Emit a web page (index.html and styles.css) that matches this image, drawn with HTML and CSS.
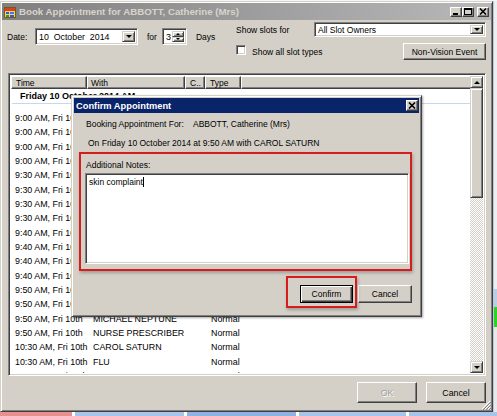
FILE: index.html
```html
<!DOCTYPE html>
<html>
<head>
<meta charset="utf-8">
<title>Book Appointment</title>
<link rel="stylesheet" href="styles.css">
</head>
<body>
<div class="screen">
  <div class="top-strip"></div>
  <div class="main">
    <div class="window">
      <div class="titlebar">
        <svg class="app-icon" width="12" height="12" viewBox="0 0 12 12">
          <rect x="0.5" y="1.5" width="11" height="10" fill="#f4d36a" stroke="#7a5a10" stroke-width="1"/>
          <rect x="1" y="2" width="10" height="3" fill="#d8402a"/>
          <rect x="2" y="6" width="3" height="2" fill="#2a5bd8"/>
          <rect x="6" y="6" width="4" height="2" fill="#3a7be8"/>
          <rect x="2" y="9" width="3" height="2" fill="#2a9b3a"/>
          <rect x="6" y="9" width="4" height="2" fill="#2a5bd8"/>
        </svg>
        <span class="title">Book Appointment for ABBOTT, Catherine (Mrs)</span>
        <div class="caption-buttons">
          <span class="cbtn"><svg width="8" height="7" viewBox="0 0 8 7"><rect x="1" y="5" width="5" height="2" fill="#000"/></svg></span>
          <span class="cbtn"><svg width="8" height="7" viewBox="0 0 8 7"><rect x="0.5" y="0.5" width="7" height="6" fill="none" stroke="#000"/><rect x="0" y="0" width="8" height="2" fill="#000"/></svg></span>
          <span class="cbtn close"><svg width="8" height="7" viewBox="0 0 8 7"><path d="M1 0.5 L7 6.5 M7 0.5 L1 6.5" stroke="#000" stroke-width="1.6"/></svg></span>
        </div>
      </div>
      <div class="content">
        <div class="toolbar">
          <div class="date-row">
            <span class="lbl date-lbl">Date:</span>
            <div class="field combo date-combo">
              <span class="combo-text">10&nbsp; October&nbsp; 2014</span>
              <span class="drop"><i class="arrow-down"></i></span>
            </div>
            <span class="lbl for-lbl">for</span>
            <div class="field spin">
              <span class="spin-val">3</span>
              <span class="spin-btns">
                <span class="sb"><i class="arrow-up small"></i></span>
                <span class="sb"><i class="arrow-down small"></i></span>
              </span>
            </div>
            <span class="lbl days-lbl">Days</span>
          </div>
          <div class="slot-group">
            <div class="slot-row">
              <span class="lbl">Show slots for</span>
              <div class="field combo slot-combo">
                <span class="combo-text">All Slot Owners</span>
                <span class="drop"><i class="arrow-down"></i></span>
              </div>
            </div>
            <div class="type-row">
              <span class="check"></span>
              <span class="lbl check-lbl">Show all slot types</span>
              <span class="btn nv-btn">Non-Vision Event</span>
            </div>
          </div>
        </div>

        <div class="list field">
          <div class="list-body">
            <div class="list-head">
              <span class="hc">Time</span>
              <span class="hc hc-with">With</span>
              <span class="hc">C..</span>
              <span class="hc">Type</span>
              <span class="hc hc-fill"></span>
            </div>
            <div class="group">Friday 10 October 2014 AM</div>
            <div class="rows">
              <div class="row"><span>9:00 AM, Fri 10</span><span></span><span></span><span></span></div>
              <div class="row"><span>9:00 AM, Fri 10</span><span></span><span></span><span></span></div>
              <div class="row"><span>9:00 AM, Fri 10</span><span></span><span></span><span></span></div>
              <div class="row"><span>9:00 AM, Fri 10</span><span></span><span></span><span></span></div>
              <div class="row"><span>9:30 AM, Fri 10</span><span></span><span></span><span></span></div>
              <div class="row"><span>9:30 AM, Fri 10</span><span></span><span></span><span></span></div>
              <div class="row"><span>9:30 AM, Fri 10</span><span></span><span></span><span></span></div>
              <div class="row"><span>9:30 AM, Fri 10</span><span></span><span></span><span></span></div>
              <div class="row"><span>9:40 AM, Fri 10</span><span></span><span></span><span></span></div>
              <div class="row"><span>9:40 AM, Fri 10</span><span></span><span></span><span></span></div>
              <div class="row"><span>9:40 AM, Fri 10</span><span></span><span></span><span></span></div>
              <div class="row"><span>9:40 AM, Fri 10</span><span></span><span></span><span></span></div>
              <div class="row"><span>9:50 AM, Fri 10</span><span></span><span></span><span></span></div>
              <div class="row"><span>9:50 AM, Fri 10</span><span></span><span></span><span></span></div>
              <div class="row"><span>9:50 AM, Fri 10th</span><span>MICHAEL NEPTUNE</span><span></span><span>Normal</span></div>
              <div class="row"><span>9:50 AM, Fri 10th</span><span>NURSE PRESCRIBER</span><span></span><span>Normal</span></div>
              <div class="row"><span>10:30 AM, Fri 10th</span><span>CAROL SATURN</span><span></span><span>Normal</span></div>
              <div class="row"><span>10:30 AM, Fri 10th</span><span>FLU</span><span></span><span>Normal</span></div>
              <div class="row"><span>10:30 AM, Fri 10th</span><span>MICHAEL NEPTUNE</span><span></span><span>Normal</span></div>
            </div>
          </div>
          <div class="vscroll">
            <span class="sbtn"><i class="arrow-up"></i></span>
            <span class="thumb"></span>
            <span class="track"></span>
            <span class="sbtn"><i class="arrow-down"></i></span>
          </div>
        </div>

        <div class="footer">
          <span class="btn foot-btn disabled">OK</span>
          <span class="btn foot-btn">Cancel</span>
        </div>
        <svg class="grip" width="10" height="10" viewBox="0 0 10 10">
          <path d="M9 1 L1 9 M9 4 L4 9 M9 7 L7 9" stroke="#fff" stroke-width="1"/>
          <path d="M10 2 L2 10 M10 5 L5 10 M10 8 L8 10" stroke="#808080" stroke-width="1"/>
        </svg>
      </div>
    </div>
    <div class="right-strip">
      <span class="rs-a"></span><span class="rs-b"></span><span class="rs-c"></span><span class="rs-d"></span>
    </div>
  </div>
  <div class="bottom-strip">
    <span class="bs bs-pink"></span><span class="bs-gap"></span>
    <span class="bs bs-lb w1"></span><span class="bs-gap"></span>
    <span class="bs bs-blue w2"></span><span class="bs-gap"></span>
    <span class="bs bs-lb w3"></span><span class="bs-gap"></span>
    <span class="bs bs-lb grow"></span>
  </div>

  <div class="dialog">
    <div class="dlg-title">
      <span class="dlg-title-text">Confirm Appointment</span>
      <span class="cbtn dlg-close"><svg width="8" height="7" viewBox="0 0 8 7"><path d="M1 0.5 L7 6.5 M7 0.5 L1 6.5" stroke="#000" stroke-width="1.6"/></svg></span>
    </div>
    <div class="info-row"><span class="info-lbl">Booking Appointment For:</span><span>ABBOTT, Catherine (Mrs)</span></div>
    <div class="info-line">On Friday 10 October 2014 at 9:50 AM with CAROL SATURN</div>
    <div class="notes-panel">
      <div class="notes-lbl">Additional Notes:</div>
      <div class="field notes-box">skin complaint<span class="caret"></span></div>
    </div>
    <div class="dlg-actions">
      <span class="btn default-btn">Confirm</span>
      <span class="btn dlg-cancel">Cancel</span>
    </div>
    <div class="highlight"></div>
  </div>
</div>
</body>
</html>
```

FILE: styles.css
```css
* { box-sizing: border-box; }

body {
  margin: 0;
  width: 497px;
  height: 416px;
  overflow: hidden;
  background: #eef0f2;
  font-family: "Liberation Sans", Arial, sans-serif;
  font-size: 8.5px;
  color: #000;
}

.screen {
  position: relative;
  width: 497px;
  height: 416px;
  display: flex;
  flex-direction: column;
}

.top-strip { height: 1px; background: #f6f6f6; }

.main { display: flex; height: 411px; }

/* ---------- main window ---------- */
.window {
  width: 493px;
  height: 411px;
  background: #d4d0c8;
  border: 1px solid;
  border-color: #d4d0c8 #404040 #404040 #d4d0c8;
  box-shadow: inset 1px 1px #fff, inset -1px -1px #808080;
  padding: 1px;
  display: flex;
  flex-direction: column;
}

.titlebar {
  height: 17px;
  flex: none;
  display: flex;
  align-items: center;
  padding-left: 2px;
  background: linear-gradient(90deg, #808080 0%, #b8b8b8 100%);
}

.app-icon { flex: none; margin-right: 3px; }

.title {
  font-weight: bold;
  font-size: 9.7px;
  color: #d8d4cc;
  white-space: nowrap;
}

.caption-buttons {
  margin-left: auto;
  display: flex;
  align-items: center;
  padding-right: 2px;
}

.cbtn {
  width: 12px;
  height: 10px;
  display: flex;
  align-items: center;
  justify-content: center;
  background: #d4d0c8;
  border: 1px solid;
  border-color: #fff #404040 #404040 #fff;
  box-shadow: inset -1px -1px #808080;
}
.cbtn.close { margin-left: 3px; }

.content {
  flex: 1;
  display: flex;
  flex-direction: column;
  position: relative;
}

.lbl { white-space: nowrap; }

/* toolbar */
.toolbar {
  height: 53px;
  flex: none;
  display: flex;
  align-items: flex-start;
}

.date-row {
  display: flex;
  align-items: center;
  height: 17px;
  margin-top: 8px;
  margin-left: 5px;
}
.date-lbl { width: 28px; }
.for-lbl { margin-left: 9px; }
.days-lbl { margin-left: 9px; }

.field {
  background: #fff;
  border: 1px solid;
  border-color: #808080 #fff #fff #808080;
  box-shadow: inset 1px 1px #404040, inset -1px -1px #d4d0c8;
}

.combo {
  display: flex;
  align-items: center;
  padding: 2px;
}
.combo-text { flex: 1; padding-left: 1px; white-space: nowrap; }
.date-combo { width: 103px; height: 17px; font-size: 8.8px; }
.slot-combo { width: 172px; height: 15px; margin-left: auto; }

.drop, .sb, .sbtn {
  display: flex;
  align-items: center;
  justify-content: center;
  background: #d4d0c8;
  border: 1px solid;
  border-color: #d4d0c8 #404040 #404040 #d4d0c8;
  box-shadow: inset 1px 1px #fff, inset -1px -1px #808080;
}
.drop { width: 13px; align-self: stretch; }

.arrow-down, .arrow-up {
  display: block;
  width: 0;
  height: 0;
  border-left: 3px solid transparent;
  border-right: 3px solid transparent;
}
.arrow-down { border-top: 3px solid #000; }
.arrow-up { border-bottom: 3px solid #000; }
.arrow-down.small, .arrow-up.small { border-left-width: 2px; border-right-width: 2px; }
.arrow-down.small { border-top-width: 2px; }
.arrow-up.small { border-bottom-width: 2px; }

.spin {
  width: 25px;
  height: 17px;
  margin-left: 5px;
  display: flex;
  padding: 2px;
}
.spin-val { flex: 1; padding-left: 1px; font-size: 9px; line-height: 13px; }
.spin-btns { width: 12px; display: flex; flex-direction: column; }
.sb { flex: 1; }

.slot-group {
  width: 250px;
  margin-left: auto;
  margin-right: 5px;
  display: flex;
  flex-direction: column;
}
.slot-row {
  display: flex;
  align-items: center;
  margin-top: 2px;
}
.type-row {
  display: flex;
  align-items: center;
  margin-top: 6px;
  height: 17px;
}
.check {
  width: 10px;
  height: 10px;
  background: #fff;
  border: 1px solid;
  border-color: #808080 #fff #fff #808080;
  box-shadow: inset 1px 1px #404040, inset -1px -1px #d4d0c8;
  margin-top: -4px;
}
.check-lbl { margin-left: 6px; }

.btn {
  display: flex;
  align-items: center;
  justify-content: center;
  white-space: nowrap;
  background: #d4d0c8;
  border: 1px solid;
  border-color: #fff #404040 #404040 #fff;
  box-shadow: inset -1px -1px #808080;
}
.nv-btn { margin-left: auto; width: 83px; height: 17px; }

/* list */
.list {
  height: 303px;
  margin: 0 5px 0 6px;
  display: flex;
  overflow: hidden;
  padding: 2px 0 2px 2px;
}
.list-body {
  flex: 1;
  overflow: hidden;
  display: flex;
  flex-direction: column;
}
.list-head {
  height: 13px;
  flex: none;
  display: grid;
  grid-template-columns: 76px 98px 20px 36px 1fr;
  background: #d4d0c8;
}
.hc {
  display: flex;
  align-items: center;
  padding-left: 4px;
  white-space: nowrap;
  border: 1px solid;
  border-color: #fff #404040 #404040 #fff;
  box-shadow: inset -1px -1px #808080;
}
.hc-with { padding-left: 3px; }
.hc-fill { border-right: none; box-shadow: inset 0 -1px #808080; }

.group {
  flex: none;
  height: 15px;
  display: flex;
  align-items: center;
  padding-left: 8px;
  font-weight: bold;
  font-size: 9px;
  border-bottom: 1px solid #c4d8ee;
  margin: 0 0 7px 1px;
}
.rows { flex: none; }
.row {
  height: 14.33px;
  display: grid;
  grid-template-columns: 76px 98px 20px 36px;
  align-items: center;
  white-space: nowrap;
  font-size: 8.9px;
}
.row span:first-child { padding-left: 4px; }
.row span:nth-child(2) { padding-left: 6px; }
.row span:nth-child(4) { padding-left: 6px; }

.vscroll {
  width: 13px;
  flex: none;
  display: flex;
  flex-direction: column;
  margin-right: 2px;
}
.sbtn { height: 12px; flex: none; }
.thumb {
  height: 110px;
  flex: none;
  background: #d4d0c8;
  border: 1px solid;
  border-color: #d4d0c8 #404040 #404040 #d4d0c8;
  box-shadow: inset 1px 1px #fff, inset -1px -1px #808080;
}
.track {
  flex: 1;
  background-color: #fff;
  background-image: repeating-conic-gradient(#d4d0c8 0 25%, #fff 0 50%);
  background-size: 2px 2px;
}

.footer {
  display: flex;
  justify-content: flex-end;
  gap: 9px;
  margin-top: 6px;
  padding-right: 5px;
}
.foot-btn { width: 60px; height: 21px; font-size: 8.8px; }
.disabled { color: #a0a0a0; text-shadow: 1px 1px #fff; }

.grip {
  position: absolute;
  right: 0;
  bottom: 0;
}

/* exterior */
.right-strip {
  flex: 1;
  display: flex;
  flex-direction: column;
  background: #e4e6ea;
  border-left: 1px solid #b9c9da;
}
.rs-a { height: 288px; background: #eceef0; }
.rs-b { height: 18px; background: #b8cde6; }
.rs-c { height: 20px; background: #28d428; }
.rs-d { flex: 1; background: #e6e8ea; }

.bottom-strip { height: 4px; display: flex; }
.bs-gap { width: 3px; background: #fff; }
.bs-pink { width: 72px; background: #e89090; }
.bs-lb { background: #a8c4e8; }
.bs-blue { background: #8fb2e2; }
.w1 { width: 109px; }
.w2 { width: 109px; }
.w3 { width: 107px; }
.grow { flex: 1; }

/* ---------- confirm dialog ---------- */
.dialog {
  position: absolute;
  left: 71px;
  top: 95px;
  width: 351px;
  height: 222px;
  background: #d4d0c8;
  border: 1px solid;
  border-color: #d4d0c8 #404040 #404040 #d4d0c8;
  box-shadow: inset 1px 1px #fff, inset -1px -1px #808080, 1px 1px 2px rgba(0,0,0,0.35);
  padding: 2px;
  display: flex;
  flex-direction: column;
}
.dlg-title {
  height: 15px;
  flex: none;
  display: flex;
  align-items: center;
  padding-left: 2px;
  background: #0a246a;
}
.dlg-title-text {
  color: #fff;
  font-weight: bold;
  font-size: 9.3px;
  white-space: nowrap;
}
.dlg-close { margin-left: auto; margin-right: 1px; width: 12px; height: 11px; }

.info-row {
  display: flex;
  margin: 5px 0 0 12px;
  height: 12px;
  align-items: center;
  white-space: nowrap;
}
.info-lbl { width: 107px; }
.info-line {
  margin: 7px 0 0 14px;
  height: 12px;
  display: flex;
  align-items: center;
  white-space: nowrap;
}

.notes-panel {
  margin: 3px 0 0 5px;
  width: 333px;
  height: 119px;
  border: 2px solid #d61c1c;
  box-shadow: 1px 2px 3px rgba(0,0,0,0.25);
  padding: 5px 0 0 5px;
  display: flex;
  flex-direction: column;
}
.notes-lbl { height: 12px; display: flex; align-items: center; }
.notes-box {
  margin: 2px 0 0 -1px;
  width: 324px;
  height: 91px;
  padding: 3px 3px;
  white-space: nowrap;
}
.caret {
  display: inline-block;
  width: 1px;
  height: 10px;
  background: #000;
  vertical-align: -2px;
}

.dlg-actions {
  display: flex;
  justify-content: flex-end;
  gap: 5px;
  margin: 14px 7px 0 0;
}
.default-btn {
  width: 53px;
  height: 18px;
  border: 1px solid #000;
  box-shadow: inset 1px 1px #fff, inset -1px -1px #404040, inset -2px -2px #808080;
}
.dlg-cancel { width: 54px; height: 18px; }

.highlight {
  position: absolute;
  left: 214px;
  top: 180px;
  width: 71px;
  height: 32px;
  border: 2px solid #d61c1c;
  box-shadow: 1px 2px 3px rgba(0,0,0,0.25);
}
```
